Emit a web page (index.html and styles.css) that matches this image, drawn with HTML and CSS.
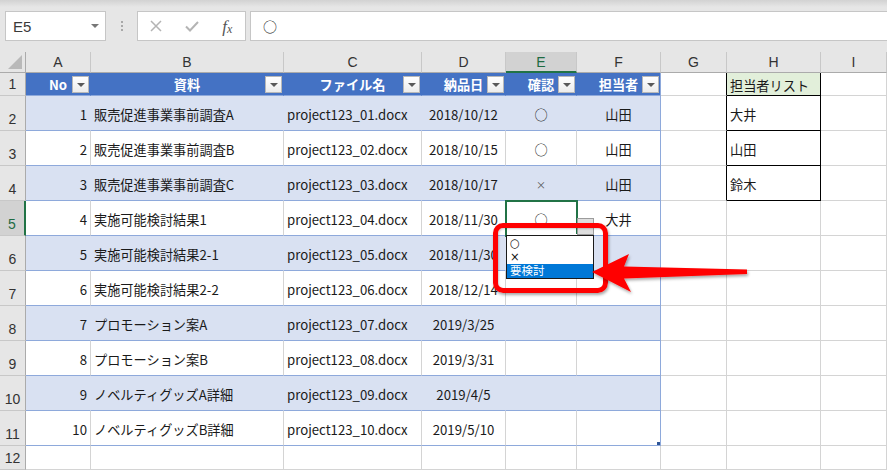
FILE: index.html
```html
<!DOCTYPE html>
<html lang="ja">
<head>
<meta charset="utf-8">
<title>Excel</title>
<link rel="stylesheet" href="styles.css">
</head>
<body>
<div class="topbar">
  <div class="namebox"><span class="nb-text">E5</span><span class="nb-tri"></span></div>
  <div class="dots"><i></i><i></i><i></i></div>
  <div class="fxbox">
    <span class="fxi"><svg width="12" height="12" viewBox="0 0 12 12"><path d="M1 1 L11 11 M11 1 L1 11" stroke="#b4b4b4" stroke-width="1.5" fill="none"/></svg></span>
    <span class="fxi"><svg width="14" height="11" viewBox="0 0 14 11"><path d="M1 5.5 L5 9.5 L13 1" stroke="#b4b4b4" stroke-width="2" fill="none"/></svg></span>
    <span class="fxi fx">f<span class="fxx">x</span></span>
  </div>
  <div class="finput">○</div>
</div>

<div class="sheet">
  <div class="c corner"></div>
  <div class="c hd">A</div><div class="c hd">B</div><div class="c hd">C</div><div class="c hd">D</div><div class="c hd sel">E</div><div class="c hd">F</div><div class="c hd">G</div><div class="c hd">H</div><div class="c hd">I</div>

  <div class="c rh">1</div>
  <div class="c th">No<span class="fb"></span></div>
  <div class="c th">資料<span class="fb"></span></div>
  <div class="c th">ファイル名<span class="fb"></span></div>
  <div class="c th">納品日<span class="fb"></span></div>
  <div class="c th">確認<span class="fb"></span></div>
  <div class="c th last">担当者<span class="fb"></span></div>
  <div class="c gb"></div>
  <div class="c hl hl-head">担当者リスト</div>
  <div class="c"></div>

  <div class="c rh">2</div>
  <div class="c bd r">1</div><div class="c bd">販売促進事業事前調査A</div><div class="c bd">project123_01.docx</div><div class="c bd ctr">2018/10/12</div><div class="c bd ctr">○</div><div class="c bd ctr last">山田</div>
  <div class="c gb"></div><div class="c hl">大井</div><div class="c"></div>

  <div class="c rh">3</div>
  <div class="c wt r">2</div><div class="c wt">販売促進事業事前調査B</div><div class="c wt">project123_02.docx</div><div class="c wt ctr">2018/10/15</div><div class="c wt ctr">○</div><div class="c wt ctr last">山田</div>
  <div class="c gb"></div><div class="c hl">山田</div><div class="c"></div>

  <div class="c rh">4</div>
  <div class="c bd r">3</div><div class="c bd">販売促進事業事前調査C</div><div class="c bd">project123_03.docx</div><div class="c bd ctr">2018/10/17</div><div class="c bd ctr"><span class="x">×</span></div><div class="c bd ctr last">山田</div>
  <div class="c gb"></div><div class="c hl">鈴木</div><div class="c"></div>

  <div class="c rh rsel">5</div>
  <div class="c wt r">4</div><div class="c wt">実施可能検討結果1</div><div class="c wt">project123_04.docx</div><div class="c wt ctr">2018/11/30</div><div class="c wt ctr">○</div><div class="c wt ctr last">大井</div>
  <div class="c"></div><div class="c"></div><div class="c"></div>

  <div class="c rh">6</div>
  <div class="c bd r">5</div><div class="c bd">実施可能検討結果2-1</div><div class="c bd">project123_05.docx</div><div class="c bd ctr">2018/11/30</div><div class="c bd"></div><div class="c bd last"></div>
  <div class="c"></div><div class="c"></div><div class="c"></div>

  <div class="c rh">7</div>
  <div class="c wt r">6</div><div class="c wt">実施可能検討結果2-2</div><div class="c wt">project123_06.docx</div><div class="c wt ctr">2018/12/14</div><div class="c wt"></div><div class="c wt last"></div>
  <div class="c"></div><div class="c"></div><div class="c"></div>

  <div class="c rh">8</div>
  <div class="c bd r">7</div><div class="c bd">プロモーション案A</div><div class="c bd">project123_07.docx</div><div class="c bd ctr">2019/3/25</div><div class="c bd"></div><div class="c bd last"></div>
  <div class="c"></div><div class="c"></div><div class="c"></div>

  <div class="c rh">9</div>
  <div class="c wt r">8</div><div class="c wt">プロモーション案B</div><div class="c wt">project123_08.docx</div><div class="c wt ctr">2019/3/31</div><div class="c wt"></div><div class="c wt last"></div>
  <div class="c"></div><div class="c"></div><div class="c"></div>

  <div class="c rh">10</div>
  <div class="c bd r">9</div><div class="c bd">ノベルティグッズA詳細</div><div class="c bd">project123_09.docx</div><div class="c bd ctr">2019/4/5</div><div class="c bd"></div><div class="c bd last"></div>
  <div class="c"></div><div class="c"></div><div class="c"></div>

  <div class="c rh">11</div>
  <div class="c wt r">10</div><div class="c wt">ノベルティグッズB詳細</div><div class="c wt">project123_10.docx</div><div class="c wt ctr">2019/5/10</div><div class="c wt"></div><div class="c wt last"><span class="rsz"></span></div>
  <div class="c"></div><div class="c"></div><div class="c"></div>

  <div class="c rh">12</div>
  <div class="c"></div><div class="c"></div><div class="c"></div><div class="c"></div><div class="c"></div><div class="c"></div><div class="c"></div><div class="c"></div><div class="c"></div>

  <div class="selbox"><span class="fill"></span></div>
  <div class="ddbtn"></div>
  <div class="ddlist">
    <div class="dd-item">○</div>
    <div class="dd-item">×</div>
    <div class="dd-item on">要検討</div>
  </div>
  <div class="callout"></div>
  <svg class="arrow" width="180" height="60" viewBox="585 245 180 60">
    <defs>
      <filter id="sh" x="-10%" y="-30%" width="130%" height="180%">
        <feDropShadow dx="1" dy="2" stdDeviation="1.5" flood-color="#000" flood-opacity="0.35"/>
      </filter>
    </defs>
    <polygon points="592,272 629,254 624,266.5 747,269.5 747,274 624,278.5 631,292" fill="#ff0000" filter="url(#sh)"/>
  </svg>
</div>
</body>
</html>
```

FILE: styles.css
```css
* { box-sizing: border-box; }
html, body { margin: 0; padding: 0; }
body {
  width: 887px;
  height: 470px;
  overflow: hidden;
  background: #e6e6e6;
  font-family: "Noto Sans CJK JP", sans-serif;
  color: #000;
}

/* formula bar */
.topbar {
  height: 52px;
  display: flex;
  align-items: flex-start;
  padding: 11px 0 0 5px;
  background: linear-gradient(#d2d2d2 0, #e6e6e6 7px, #e6e6e6 100%);
}
.namebox {
  width: 101px;
  height: 30px;
  background: #fff;
  border: 1px solid #c6c6c6;
  display: flex;
  align-items: center;
  justify-content: space-between;
  padding: 0 6px 0 7px;
}
.nb-text {
  font-family: "Liberation Sans", sans-serif;
  font-size: 15px;
  color: #3a3a3a;
}
.nb-tri {
  width: 0; height: 0;
  border-left: 4px solid transparent;
  border-right: 4px solid transparent;
  border-top: 4px solid #777;
}
.dots {
  width: 31px;
  height: 30px;
  display: flex;
  flex-direction: column;
  align-items: center;
  justify-content: center;
  gap: 2px;
}
.dots i {
  display: block;
  width: 2px; height: 2px;
  background: #a8a8a8;
}
.fxbox {
  width: 109px;
  height: 30px;
  background: #fff;
  border: 1px solid #c6c6c6;
  display: flex;
  align-items: center;
}
.fxi {
  width: 36px;
  display: flex;
  align-items: center;
  justify-content: center;
}
.fx {
  font-family: "Liberation Serif", serif;
  font-style: italic;
  font-size: 17px;
  color: #555;
  line-height: 1;
  align-items: baseline;
}
.fxx { font-size: 12px; position: relative; top: 1px; }
.finput {
  flex: 1;
  margin-left: 4px;
  height: 30px;
  background: #fff;
  border: 1px solid #c6c6c6;
  border-right: none;
  padding-left: 12px;
  display: flex;
  align-items: center;
  font-size: 14px;
  color: #222;
}

/* sheet grid */
.sheet {
  position: relative;
  display: grid;
  grid-template-columns: 26px 65px 193px 138px 84px 71px 84px 66px 94px 1fr;
  grid-template-rows: 21px 23px repeat(10, 35px) 24px;
  background: #fff;
}
.c {
  border-right: 1px solid #d4d4d4;
  border-bottom: 1px solid #d4d4d4;
  display: flex;
  align-items: center;
  padding: 2px 3px 0 3px;
  font-size: 13.2px;
  white-space: nowrap;
  min-width: 0;
  background: #fff;
  color: #1a1a1a;
}
.corner {
  background: #e6e6e6;
  border-right: 1px solid #ababab;
  border-bottom: 1px solid #ababab;
  position: relative;
}
.corner::after {
  content: "";
  position: absolute;
  right: 3px;
  bottom: 3px;
  width: 14px;
  height: 14px;
  background: #b9b9b9;
  clip-path: polygon(100% 0, 100% 100%, 0 100%);
}
.hd {
  background: #e6e6e6;
  border-right: 1px solid #c8c8c8;
  border-bottom: 1px solid #ababab;
  justify-content: center;
  padding: 0;
  font-family: "Liberation Sans", sans-serif;
  font-size: 14px;
  color: #333;
}
.hd.sel {
  background: #d2d2d2;
  border-bottom: 2px solid #217346;
  color: #1e6b42;
}
.rh {
  background: #e6e6e6;
  border-right: 1px solid #ababab;
  border-bottom: 1px solid #c8c8c8;
  justify-content: center;
  align-items: flex-end;
  padding: 0 0 3px 0;
  font-family: "Liberation Sans", sans-serif;
  font-size: 14px;
  color: #333;
}
.rh.rsel {
  background: #d2d2d2;
  border-right: 2px solid #217346;
  color: #1e6b42;
}

/* table */
.th {
  position: relative;
  background: #4472c4;
  border-right-color: #4472c4;
  border-bottom-color: #8ea9db;
  color: #fff;
  font-weight: bold;
  justify-content: center;
  padding: 0;
}
.bd {
  background: #d9e1f2;
  border-right-color: #d9e1f2;
  border-bottom-color: #8ea9db;
}
.wt {
  border-bottom-color: #8ea9db;
}
.last { border-right-color: #8ea9db; position: relative; }
.r { justify-content: flex-end; }
.ctr { justify-content: center; }
.x { font-size: 10px; color: #555; }

.fb {
  position: absolute;
  right: 1px;
  top: 3px;
  width: 17px;
  height: 17px;
  background: linear-gradient(#ffffff, #ececec);
  border: 1px solid #b8b8b8;
  display: flex;
  align-items: center;
  justify-content: center;
}
.fb::after {
  content: "";
  width: 0; height: 0;
  border-left: 4px solid transparent;
  border-right: 4px solid transparent;
  border-top: 4px solid #595959;
  margin-top: 1px;
}
.rsz {
  position: absolute;
  right: 0;
  bottom: 0;
  width: 3px;
  height: 3px;
  background: #2f5597;
}

/* list H */
.gb { border-right-color: #000; }
.hl {
  border-right: 1px solid #000;
  border-bottom: 1px solid #000;
}
.hl-head { background: #e2efda; }

/* overlays */
.selbox {
  position: absolute;
  left: 505px;
  top: 148px;
  width: 73px;
  height: 37px;
  border: 2px solid #217346;
}
.selbox .fill {
  position: absolute;
  right: -4px;
  bottom: -4px;
  width: 5px;
  height: 5px;
  background: #217346;
  border: 1px solid #fff;
}
.ddbtn {
  position: absolute;
  left: 577px;
  top: 166px;
  width: 17px;
  height: 17px;
  background: #dedede;
  border: 1px solid #9c9c9c;
}
.ddlist {
  position: absolute;
  left: 506px;
  top: 183px;
  width: 88px;
  height: 44px;
  background: #fff;
  border: 1px solid #1a1a1a;
  font-family: "DejaVu Sans", "Noto Sans CJK JP", sans-serif;
  font-size: 11.5px;
}
.dd-item {
  height: 14px;
  line-height: 14px;
  padding-left: 3px;
  color: #111;
}
.dd-item.on {
  background: #0078d7;
  color: #fff;
}
.callout {
  position: absolute;
  left: 493px;
  top: 171px;
  width: 115px;
  height: 70px;
  border: 5px solid #ff0000;
  border-radius: 10px;
  box-shadow: 1px 2px 3px rgba(0,0,0,0.35), inset 1px 1px 2px rgba(0,0,0,0.2);
}
.arrow {
  position: absolute;
  left: 585px;
  top: 193px;
}
```
